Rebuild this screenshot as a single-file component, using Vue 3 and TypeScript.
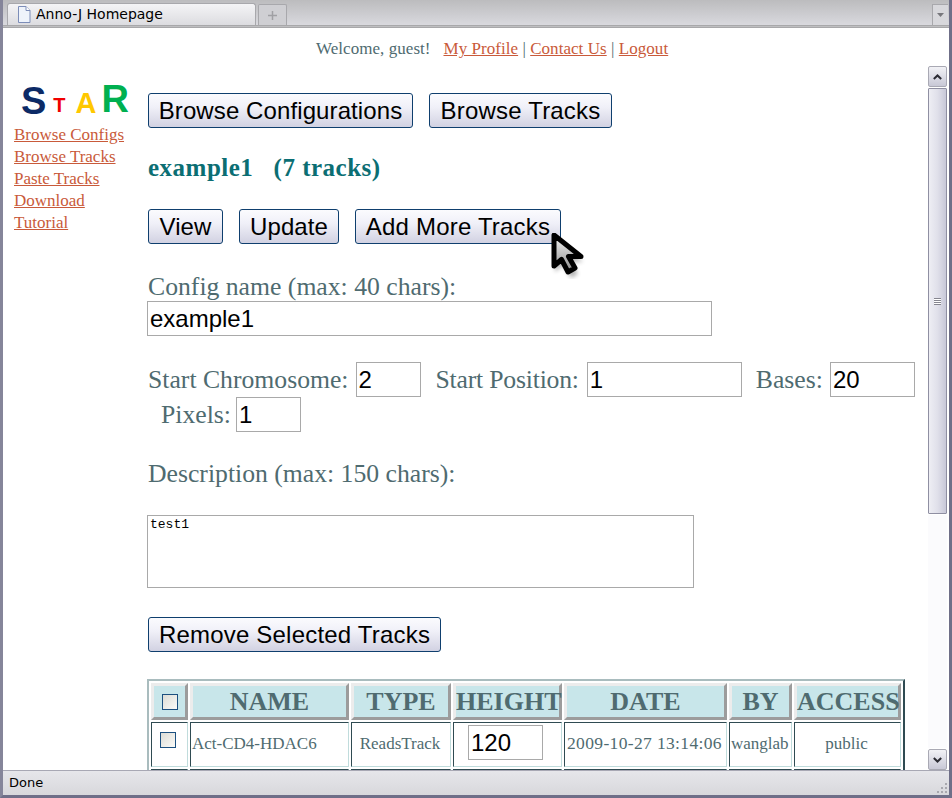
<script setup lang="ts">
interface Track {
  name: string
  type: string
  height: string
  date: string
  by: string
  access: string
}

const navLinks = ['Browse Configs', 'Browse Tracks', 'Paste Tracks', 'Download', 'Tutorial']
const columns = ['NAME', 'TYPE', 'HEIGHT', 'DATE', 'BY', 'ACCESS']
const colWidths = [37, 159, 100, 109, 163, 63, 107]

const tracks: Track[] = [
  { name: 'Act-CD4-HDAC6', type: 'ReadsTrack', height: '120', date: '2009-10-27 13:14:06', by: 'wanglab', access: 'public' },
]
</script>

<template>
  <div class="window">
    <div class="tabbar">
      <div class="tab">
        <svg class="page-icon" width="14" height="17" viewBox="0 0 14 17">
          <path d="M1.5 .5H9L13 4.5V16.5H1.5Z" fill="#eef3fb" stroke="#7c8db8" />
          <path d="M9 .5V4.5H13" fill="#fff" stroke="#7c8db8" />
        </svg>
        <span class="tab-title">Anno-J Homepage</span>
      </div>
      <div class="tab-new">
        <svg width="9" height="9" viewBox="0 0 9 9">
          <path d="M4.5 0V9M0 4.5H9" stroke="#a0a0a4" stroke-width="1.5" />
        </svg>
      </div>
      <div class="tab-menu">
        <svg width="7" height="4" viewBox="0 0 7 4"><path d="M0 0H7L3.5 4Z" fill="#77777c" /></svg>
      </div>
    </div>

    <div class="page">
      <div class="welcome">
        Welcome, guest! &nbsp; <a>My Profile</a> | <a>Contact Us</a> | <a>Logout</a>
      </div>

      <div class="viewport">
        <aside class="sidebar">
          <div class="logo">
            <span class="l-s">S</span><span class="l-t">T</span><span class="l-a">A</span><span class="l-r">R</span>
          </div>
          <a v-for="link in navLinks" :key="link" class="nav-link">{{ link }}</a>
        </aside>

        <main class="main">
          <div class="btn-row">
            <button class="btn btn-configs">Browse Configurations</button>
            <button class="btn btn-tracks">Browse Tracks</button>
          </div>

          <h2 class="title">example1 &nbsp; (7 tracks)</h2>

          <div class="btn-row">
            <button class="btn btn-view">View</button>
            <button class="btn btn-update">Update</button>
            <button class="btn btn-add">Add More Tracks</button>
          </div>

          <div class="label name-label">Config name (max: 40 chars):</div>
          <input class="text-input name-input" value="example1" />

          <div class="field-row first-fields">
            <span class="label">Start Chromosome:</span>
            <input class="text-input w65" value="2" />
            <span class="label pos-label">Start Position:</span>
            <input class="text-input w155" value="1" />
            <span class="label bases-label">Bases:</span>
            <input class="text-input w85" value="20" />
          </div>
          <div class="field-row second-fields">
            <span class="label">Pixels:</span>
            <input class="text-input w65" value="1" />
          </div>

          <div class="label desc-label">Description (max: 150 chars):</div>
          <textarea class="desc">test1</textarea>

          <div class="btn-row remove-row">
            <button class="btn btn-remove">Remove Selected Tracks</button>
          </div>

          <table class="tracks">
            <colgroup>
              <col v-for="(w, i) in colWidths" :key="i" :style="{ width: w + 'px' }" />
            </colgroup>
            <thead>
              <tr>
                <th><input type="checkbox" class="check" /></th>
                <th v-for="col in columns" :key="col">{{ col }}</th>
              </tr>
            </thead>
            <tbody>
              <tr v-for="(t, i) in tracks" :key="i">
                <td><input type="checkbox" class="check row-check" /></td>
                <td>{{ t.name }}</td>
                <td class="center">{{ t.type }}</td>
                <td><input class="text-input height-input" :value="t.height" /></td>
                <td class="date">{{ t.date }}</td>
                <td>{{ t.by }}</td>
                <td class="center">{{ t.access }}</td>
              </tr>
              <tr>
                <td v-for="w in colWidths" :key="w"></td>
              </tr>
            </tbody>
          </table>

          <svg class="cursor" width="38" height="46" viewBox="0 0 38 46">
            <defs>
              <linearGradient id="cursor-fill" x1="0" y1="0" x2="0" y2="1">
                <stop offset="0" stop-color="#f4f4f4" />
                <stop offset="1" stop-color="#8c8c8c" />
              </linearGradient>
            </defs>
            <path d="M4 3 V35 L12 28 L20 41 L27 37 L20 25 L32 25 Z" fill="#000" opacity=".3" transform="translate(0 4)" filter="blur(2px)" />
            <path d="M3 2 V33 L10.500 26.500 L17 39 L24 35 L17.500 23.500 L30 23.500 Z" fill="url(#cursor-fill)" stroke="#000" stroke-width="5" stroke-linejoin="round" />
          </svg>
        </main>

        <div class="scrollbar">
          <div class="sb-btn">
            <svg width="9" height="6" viewBox="0 0 9 6"><path d="M.8 5L4.5 1.500L8.200 5" fill="none" stroke="#2c2c34" stroke-width="2" /></svg>
          </div>
          <div class="sb-thumb">
            <span class="grip"></span>
          </div>
          <div class="sb-track"></div>
          <div class="sb-btn">
            <svg width="9" height="6" viewBox="0 0 9 6"><path d="M.8 1L4.5 4.500L8.200 1" fill="none" stroke="#2c2c34" stroke-width="2" /></svg>
          </div>
        </div>
      </div>
    </div>

    <div class="statusbar">
      <span>Done</span>
      <svg class="resize" width="12" height="12" viewBox="0 0 12 12">
        <path d="M9 1h2v2H9zM5 5h2v2H5zM9 5h2v2H9zM1 9h2v2H1zM5 9h2v2H5zM9 9h2v2H9z" fill="#a8a8ae" />
      </svg>
    </div>
  </div>
</template>

<style>
html,
body {
  margin: 0;
  padding: 0;
  background: #fff;
}
</style>

<style scoped>
.window {
  width: 952px;
  height: 798px;
  box-sizing: border-box;
  display: flex;
  flex-direction: column;
  overflow: hidden;
  background: #fff;
  border-left: 3px solid #85859a;
  border-right: 3px solid #6f6f88;
  border-bottom: 3px solid #6f6f88;
  font-family: "Liberation Serif", serif;
  color: #4f6b70;
}

.tabbar {
  height: 28px;
  flex: none;
  box-sizing: border-box;
  display: flex;
  align-items: flex-end;
  padding: 2px 1px 0 4px;
  gap: 2px;
  background: linear-gradient(#bcbcbe, #d9d9de);
  border-bottom: 3px double #a8a8aa;
}

.tab {
  width: 249px;
  height: 22px;
  box-sizing: border-box;
  display: flex;
  align-items: center;
  gap: 5px;
  padding-left: 9px;
  border: 1px solid #a8a8ac;
  border-bottom: none;
  border-radius: 3px 3px 0 0;
  background: linear-gradient(#f4f4f6, #dcdce0);
  font: 14px "DejaVu Sans", sans-serif;
  color: #000;
}

.tab-title {
  margin-top: -2px;
}

.tab-new {
  width: 29px;
  height: 21px;
  box-sizing: border-box;
  display: flex;
  align-items: center;
  justify-content: center;
  border: 1px solid #a8a8ac;
  border-bottom: none;
  border-radius: 2px 2px 0 0;
  background: #cfcfd3;
}

.tab-menu {
  margin-left: auto;
  width: 16px;
  height: 21px;
  box-sizing: border-box;
  display: flex;
  align-items: center;
  justify-content: center;
  border-left: 1px solid #a8a8ac;
  border-top: 1px solid #a8a8ac;
  background: #d8d8dc;
}

.page {
  flex: 1;
  min-height: 0;
  display: flex;
  flex-direction: column;
}

.welcome {
  height: 38px;
  flex: none;
  box-sizing: border-box;
  padding: 11px 0 0 313px;
  font-size: 17px;
  line-height: 20px;
  letter-spacing: .05px;
  white-space: nowrap;
}

.welcome a,
.nav-link {
  color: #c95a3a;
  text-decoration: underline;
}

.viewport {
  flex: 1;
  min-height: 0;
  display: flex;
}

.sidebar {
  width: 144px;
  flex: none;
  box-sizing: border-box;
  padding: 12px 0 0 11px;
}

.logo {
  height: 46px;
  margin-left: 7px;
  display: flex;
  align-items: center;
  font: bold 38px "Liberation Sans", sans-serif;
  line-height: 44px;
  white-space: nowrap;
}

.l-s { color: #0c2a66; }
.l-t { color: #f00000; font-size: 20px; margin: 8px 10px 0 7px; }
.l-a { color: #ffc800; font-size: 29px; margin: 4px 5px 0 0; }
.l-r { color: #00b050; margin-top: -4px; }

.nav-link {
  display: block;
  width: fit-content;
  font-size: 17px;
  line-height: 22px;
}

.main {
  flex: 1;
  min-width: 0;
  position: relative;
  overflow: hidden;
}

.btn-row {
  display: flex;
  gap: 16px;
  padding-left: 1px;
}

.main > .btn-row:first-child {
  margin-top: 27px;
}

.btn {
  height: 35px;
  box-sizing: border-box;
  padding: 0;
  border: 1px solid #0f3f6e;
  border-radius: 3px;
  background: linear-gradient(#fbfbfe, #f0f0f8 40%, #d2d2e2);
  font: 24px/30px "Liberation Sans", sans-serif;
  letter-spacing: .1px;
  color: #000;
  white-space: nowrap;
}

.btn-configs { width: 265px; }
.btn-tracks { width: 183px; letter-spacing: .2px; }
.btn-view { width: 75px; }
.btn-update { width: 100px; }
.btn-add { width: 206px; letter-spacing: .2px; }
.btn-remove { width: 293px; letter-spacing: .2px; }

.title {
  margin: 26px 0 27px 1px;
  height: 28px;
  font: bold 25px/28px "Liberation Serif", serif;
  letter-spacing: .5px;
  color: #0b6e73;
  white-space: pre;
}

.label {
  font-size: 25.7px;
  line-height: 28px;
  white-space: nowrap;
}

.name-label {
  margin: 29px 0 0 1px;
  height: 28px;
}

.text-input {
  box-sizing: border-box;
  height: 35px;
  padding: 0 2px;
  border: 1px solid #a9a9a9;
  font: 24px "Liberation Sans", sans-serif;
  color: #000;
  outline: none;
}

.name-input {
  display: block;
  width: 565px;
}

.field-row {
  display: flex;
  align-items: center;
  height: 35px;
}

.first-fields {
  margin-top: 26px;
  padding-left: 1px;
}

.first-fields .text-input {
  margin-left: 7px;
}

.pos-label {
  margin-left: 15px;
  letter-spacing: -.2px;
}

.first-fields .pos-label + .text-input {
  margin-left: 8px;
}

.bases-label {
  margin-left: 14px;
}

.second-fields {
  padding-left: 14px;
}

.second-fields .text-input {
  margin-left: 5px;
}

.w65 { width: 65px; }
.w155 { width: 155px; }
.w85 { width: 85px; }

.desc-label {
  margin: 28px 0 0 1px;
  height: 55px;
}

.desc {
  display: block;
  box-sizing: border-box;
  width: 547px;
  height: 73px;
  padding: 2px;
  border: 1px solid #a9a9a9;
  font: 13px/13px "Liberation Mono", monospace;
  color: #000;
  resize: none;
  outline: none;
}

.remove-row {
  margin-top: 29px;
}

.tracks {
  margin-top: 27px;
  table-layout: fixed;
  width: 758px;
  box-sizing: border-box;
  border-collapse: separate;
  border-spacing: 2px;
  border-width: 2px;
  border-style: solid;
  border-color: #a9bcbe #2f4b52 #2f4b52 #a9bcbe;
}

th {
  height: 37px;
  box-sizing: border-box;
  padding: 0;
  border-width: 3px;
  border-style: solid;
  border-color: #ececec #9c9c9c #9c9c9c #ececec;
  background: #c8e6ea;
  font: bold 26px/30px "Liberation Serif", serif;
  color: #4f6b70;
  text-align: center;
  white-space: nowrap;
}

td {
  height: 45px;
  box-sizing: border-box;
  padding: 0 1px 2px;
  border-width: 1px;
  border-style: solid;
  border-color: #2f4b52 #c0dcdc #c0dcdc #2f4b52;
  font-size: 17px;
  white-space: nowrap;
}

td.center {
  text-align: center;
  padding-right: 3px;
}

.date {
  font-size: 17.5px;
  letter-spacing: .35px;
  padding-left: 2px;
}

.check {
  appearance: none;
  display: block;
  width: 16px;
  height: 16px;
  margin: 0 auto;
  box-sizing: border-box;
  border: 1px solid #1c5080;
  background: linear-gradient(135deg, #dcdcd6, #fbfbf8);
}

.row-check {
  margin: -7px 0 0 7px;
}

.height-input {
  display: block;
  width: 75px;
  margin: -2px 0 0 13px;
}

.cursor {
  position: absolute;
  left: 404px;
  top: 167px;
}

.scrollbar {
  width: 19px;
  margin-right: 2px;
  flex: none;
  display: flex;
  flex-direction: column;
  gap: 1px;
}

.sb-btn {
  height: 21px;
  flex: none;
  box-sizing: border-box;
  display: flex;
  align-items: center;
  justify-content: center;
  border: 1px solid #a9a9b4;
  border-radius: 2px;
  background: linear-gradient(#f2f2f6, #c8c8d6);
}

.sb-thumb {
  height: 426px;
  flex: none;
  box-sizing: border-box;
  display: flex;
  align-items: center;
  justify-content: center;
  border: 1px solid #8f8fa2;
  border-radius: 1px;
  background: linear-gradient(90deg, #eeeef4, #e0e0ea 50%, #c8c8d8);
}

.grip {
  width: 7px;
  height: 7px;
  background: repeating-linear-gradient(#85858f 0 1px, #fff 1px 2px);
}

.sb-track {
  flex: 1;
  background: #fbfbfd;
}

.statusbar {
  height: 25px;
  flex: none;
  box-sizing: border-box;
  position: relative;
  display: flex;
  align-items: center;
  padding: 0 0 2px 6px;
  border-top: 1px solid #a8a8b4;
  background: linear-gradient(#e6e6ea, #d8d8dc);
  font: 13px "DejaVu Sans", sans-serif;
  color: #000;
}

.resize {
  position: absolute;
  right: 1px;
  bottom: 1px;
}
</style>
